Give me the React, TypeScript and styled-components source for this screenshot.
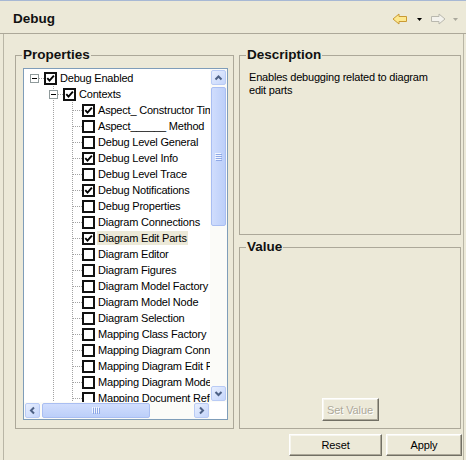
import React from "react";
import styled, { createGlobalStyle } from "styled-components";

const GlobalStyle = createGlobalStyle`
  html, body { margin: 0; padding: 0; background: #ece9d8; }
  body { font-family: "Liberation Sans", Arial, sans-serif; font-size: 11px; color: #000; }
  * { box-sizing: border-box; }
`;

const Window = styled.div`
  width: 466px;
  height: 460px;
  background: #ece9d8;
  overflow: hidden;
  display: flex;
  flex-direction: column;
`;

const Header = styled.header`
  flex: none;
  height: 34px;
  border-top: 1px solid #a7b8d4;
  border-bottom: 1px solid #aca899;
  display: flex;
  align-items: center;
  padding: 4px 8px 0 13px;
`;

const Title = styled.h1`
  flex: 1;
  margin: 0;
  font-size: 13.5px;
  line-height: 16px;
  font-weight: bold;
  color: #111;
`;

const Toolbar = styled.div`
  display: flex;
  align-items: center;
`;

const ToolIcon = styled.svg<{ $gap: number }>`
  display: block;
  flex: none;
  margin-left: ${(p) => p.$gap}px;
`;

const Body = styled.div`
  flex: 1;
  margin: 0 2px 0 3px;
  border-left: 1px solid #b9b6a6;
  border-right: 1px solid #b9b6a6;
  padding: 13px 1px 0 11px;
  display: flex;
  flex-direction: column;
`;

const Main = styled.div`
  display: grid;
  grid-template-columns: 219px 222px;
  column-gap: 5px;
  padding-right: 1px;
`;

const Group = styled.fieldset`
  margin: 0;
  padding: 0;
  min-width: 0;
  border: 1px solid #aca899;
`;

const Legend = styled.legend`
  margin-left: 6px;
  padding: 0 1px;
  font-size: 13.5px;
  line-height: 16px;
  font-weight: bold;
  color: #111;
`;

const PropsInner = styled.div`
  padding: 5px 5px 8px 7px;
`;

const RightColumn = styled.div`
  display: flex;
  flex-direction: column;
  gap: 4px;
`;

const DescInner = styled.div`
  height: 171px;
  padding: 8px 9px;
`;

const DescText = styled.p`
  margin: 0;
  max-width: 195px;
  font-size: 11px;
  line-height: 13px;
  letter-spacing: -0.2px;
`;

const ValueInner = styled.div`
  height: 173px;
  display: flex;
  flex-direction: column;
  justify-content: flex-end;
  align-items: center;
  padding-bottom: 7px;
`;

const PushButton = styled.button<{ $w: number; $h: number }>`
  width: ${(p) => p.$w}px;
  height: ${(p) => p.$h}px;
  padding: 0;
  font-family: "Liberation Sans", Arial, sans-serif;
  font-size: 11px;
  letter-spacing: -0.1px;
  color: #000;
  background: #ece9d8;
  border: 1px solid;
  border-color: #ffffff #716f64 #716f64 #ffffff;
  box-shadow: inset -1px -1px 0 #aca899, inset 1px 1px 0 #f7f6ef;
  &:disabled {
    color: #aca899;
    text-shadow: 1px 1px 0 #ffffff;
  }
`;

const Footer = styled.div`
  display: flex;
  justify-content: flex-end;
  gap: 4px;
  padding-top: 5px;
`;

/* ---------- Tree ---------- */

const TreeBox = styled.div`
  width: 205px;
  height: 352px;
  border: 1px solid #7f9db9;
  background: #fff;
  display: grid;
  grid-template-columns: 1fr 17px;
  grid-template-rows: 1fr 17px;
`;

const TreeContent = styled.div`
  overflow: hidden;
  padding-top: 1px;
`;

const Row = styled.div`
  display: flex;
  height: 16px;
  padding-left: 1px;
  white-space: nowrap;
`;

const LineCell = styled.svg`
  display: block;
  flex: none;
`;

const CheckBox = styled.span`
  flex: none;
  width: 13px;
  height: 13px;
  margin-top: 2px;
  border: 2px solid #111;
  background: #fff;
  display: flex;
  align-items: center;
  justify-content: center;
`;

const Label = styled.span<{ $selected?: boolean }>`
  display: inline-block;
  height: 14px;
  line-height: 14px;
  margin: 1px 0 0 2px;
  padding: 0 1px;
  font-size: 11px;
  letter-spacing: -0.2px;
  background: ${(p) => (p.$selected ? "#ece9d8" : "transparent")};
`;

/* ---------- Scrollbars ---------- */

const VScroll = styled.div`
  display: flex;
  flex-direction: column;
  background: #fbfbf8;
`;

const HScroll = styled.div`
  display: flex;
  background: #fbfbf8;
`;

const Corner = styled.div`
  background: #fff;
`;

const ScrollBtn = styled.div`
  flex: none;
  width: 15px;
  height: 15px;
  margin: 1px;
  border-radius: 2px;
  border: 1px solid #b9cbf5;
  background: linear-gradient(135deg, #e8effe 0%, #c4d5fb 100%);
  display: flex;
  align-items: center;
  justify-content: center;
`;

const Thumb = styled.div<{ $vertical?: boolean }>`
  flex: none;
  margin: 1px;
  border-radius: 2px;
  border: 1px solid #a9bef2;
  background: ${(p) =>
    p.$vertical
      ? "linear-gradient(to right, #d0ddfd, #bccff9)"
      : "linear-gradient(to bottom, #d0ddfd, #bccff9)"};
  display: flex;
  align-items: center;
  justify-content: center;
  ${(p) => (p.$vertical ? "width: 15px; height: 139px;" : "height: 15px; width: 108px;")}
`;

const Track = styled.div`
  flex: 1;
`;

const Glyph = styled.svg`
  display: block;
`;

type Dir = "up" | "down" | "left" | "right";
const chevrons: Record<Dir, string> = {
  up: "3.5,8.5 6.5,5.5 9.5,8.5",
  down: "3.5,5 6.5,8 9.5,5",
  left: "8,3.5 5,6.5 8,9.5",
  right: "5,3.5 8,6.5 5,9.5",
};

const Arrow = ({ dir }: { dir: Dir }) => (
  <ScrollBtn>
    <Glyph width="13" height="13" viewBox="0 0 13 13">
      <polyline points={chevrons[dir]} fill="none" stroke="#4d6185" strokeWidth="2" />
    </Glyph>
  </ScrollBtn>
);

const Grip = ({ vertical }: { vertical?: boolean }) =>
  vertical ? (
    <Glyph width="7" height="8" viewBox="0 0 7 8">
      {[0, 2, 4, 6].map((y) => (
        <g key={y}>
          <rect x="0" y={y} width="6" height="1" fill="#f2f6fe" />
          <rect x="1" y={y + 1} width="6" height="1" fill="#8ea8e6" />
        </g>
      ))}
    </Glyph>
  ) : (
    <Glyph width="8" height="7" viewBox="0 0 8 7">
      {[0, 2, 4, 6].map((x) => (
        <g key={x}>
          <rect x={x} y="0" width="1" height="6" fill="#f2f6fe" />
          <rect x={x + 1} y="1" width="1" height="6" fill="#8ea8e6" />
        </g>
      ))}
    </Glyph>
  );

/* ---------- Tree data ---------- */

type Item = { label: string; level: number; checked: boolean; selected?: boolean };

const items: Item[] = [
  { label: "Debug Enabled", level: 0, checked: true },
  { label: "Contexts", level: 1, checked: true },
  { label: "Aspect_ Constructor Timing", level: 2, checked: true },
  { label: "Aspect______ Method", level: 2, checked: false },
  { label: "Debug Level General", level: 2, checked: false },
  { label: "Debug Level Info", level: 2, checked: true },
  { label: "Debug Level Trace", level: 2, checked: false },
  { label: "Debug Notifications", level: 2, checked: true },
  { label: "Debug Properties", level: 2, checked: false },
  { label: "Diagram Connections", level: 2, checked: false },
  { label: "Diagram Edit Parts", level: 2, checked: true, selected: true },
  { label: "Diagram Editor", level: 2, checked: false },
  { label: "Diagram Figures", level: 2, checked: false },
  { label: "Diagram Model Factory", level: 2, checked: false },
  { label: "Diagram Model Node", level: 2, checked: false },
  { label: "Diagram Selection", level: 2, checked: false },
  { label: "Mapping Class Factory", level: 2, checked: false },
  { label: "Mapping Diagram Connections", level: 2, checked: false },
  { label: "Mapping Diagram Edit Parts", level: 2, checked: false },
  { label: "Mapping Diagram Model", level: 2, checked: false },
  { label: "Mapping Document Reference", level: 2, checked: false },
];

const DOT = { stroke: "#a3a3a3", strokeDasharray: "1 1" };

const GuideCell = ({ line }: { line: boolean }) => (
  <LineCell width="19" height="16" viewBox="0 0 19 16">
    {line && <line x1="9.5" y1="0" x2="9.5" y2="16" {...DOT} />}
  </LineCell>
);

const NodeCell = ({ vLine, box }: { vLine: boolean; box: boolean }) => (
  <LineCell width="19" height="16" viewBox="0 0 19 16">
    {vLine && <line x1="9.5" y1="0" x2="9.5" y2="16" {...DOT} />}
    <line x1={box ? 14 : 10} y1="8.5" x2="19" y2="8.5" {...DOT} />
    {box && (
      <>
        <rect x="5.5" y="4.5" width="8" height="8" fill="#fff" stroke="#8f9a9b" />
        <line x1="7" y1="8.5" x2="12" y2="8.5" stroke="#000" />
      </>
    )}
  </LineCell>
);

const TreeRow = ({ item }: { item: Item }) => {
  const guides: boolean[] = [];
  for (let l = 0; l < item.level; l++) guides.push(l === 1);
  return (
    <Row>
      {guides.map((g, i) => (
        <GuideCell key={i} line={g} />
      ))}
      <NodeCell vLine={item.level > 0} box={item.level < 2} />
      <CheckBox>
        {item.checked && (
          <Glyph width="9" height="9" viewBox="0 0 9 9">
            <polyline points="1.3,4.2 3.5,6.6 7.9,1.6" fill="none" stroke="#000" strokeWidth="1.9" />
          </Glyph>
        )}
      </CheckBox>
      <Label $selected={item.selected}>{item.label}</Label>
    </Row>
  );
};

/* ---------- Header arrows ---------- */

const NavArrow = ({ back }: { back?: boolean }) => (
  <ToolIcon $gap={back ? 0 : 8} width="16" height="16" viewBox="0 0 16 16">
    <g transform={back ? undefined : "translate(16,0) scale(-1,1)"}>
      <path
        d="M1 8 L7 3 L7 5.5 L14.5 5.5 L14.5 10.5 L7 10.5 L7 13 Z"
        fill={back ? "#fde88f" : "#f3f2ec"}
        stroke={back ? "#c99a34" : "#b9b8ae"}
        strokeLinejoin="round"
      />
    </g>
  </ToolIcon>
);

const DropTri = ({ gap, color }: { gap: number; color: string }) => (
  <ToolIcon $gap={gap} width="5" height="3" viewBox="0 0 5 3">
    <polygon points="0,0 5,0 2.5,3" fill={color} />
  </ToolIcon>
);

export default function App() {
  return (
    <>
      <GlobalStyle />
      <Window>
        <Header>
          <Title>Debug</Title>
          <Toolbar>
            <NavArrow back />
            <DropTri gap={9} color="#000" />
            <NavArrow />
            <DropTri gap={7} color="#aaa89c" />
          </Toolbar>
        </Header>
        <Body>
          <Main>
            <Group>
              <Legend>Properties</Legend>
              <PropsInner>
                <TreeBox>
                  <TreeContent>
                    {items.map((it, i) => (
                      <TreeRow key={i} item={it} />
                    ))}
                  </TreeContent>
                  <VScroll>
                    <Arrow dir="up" />
                    <Thumb $vertical>
                      <Grip vertical />
                    </Thumb>
                    <Track />
                    <Arrow dir="down" />
                  </VScroll>
                  <HScroll>
                    <Arrow dir="left" />
                    <Thumb>
                      <Grip />
                    </Thumb>
                    <Track />
                    <Arrow dir="right" />
                  </HScroll>
                  <Corner />
                </TreeBox>
              </PropsInner>
            </Group>
            <RightColumn>
              <Group>
                <Legend>Description</Legend>
                <DescInner>
                  <DescText>Enables debugging related to diagram edit parts</DescText>
                </DescInner>
              </Group>
              <Group>
                <Legend>Value</Legend>
                <ValueInner>
                  <PushButton $w={57} $h={23} disabled>
                    Set Value
                  </PushButton>
                </ValueInner>
              </Group>
            </RightColumn>
          </Main>
          <Footer>
            <PushButton $w={93} $h={22}>Reset</PushButton>
            <PushButton $w={76} $h={22}>Apply</PushButton>
          </Footer>
        </Body>
      </Window>
    </>
  );
}
